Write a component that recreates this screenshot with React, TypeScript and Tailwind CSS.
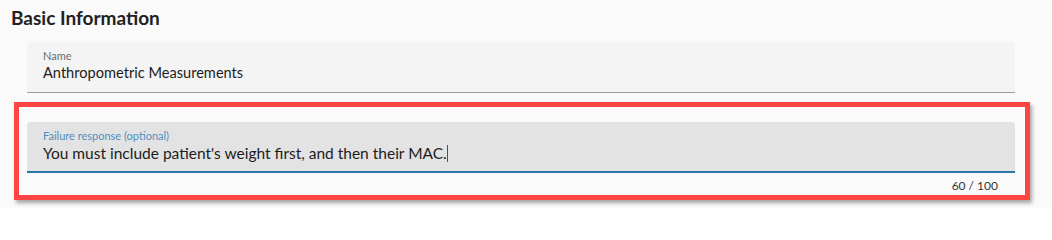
export default function App() {
  return (
    <div className="w-[1052px] h-[208px] bg-[#fafafa] font-['Lato',sans-serif] text-[#1f1f1f] overflow-hidden">
      <h2 className="pl-[11px] pt-[6px] text-[19px] leading-[24px] font-bold text-[#212121]">Basic Information</h2>

      <div className="ml-[27px] mt-[12px] w-[988px] h-[51px] bg-[#f4f4f4] border-b border-[#9c9c9c] rounded-t-[4px] px-[16px] pt-[7px]">
        <div className="text-[11px] leading-[14px] text-[#6b6b6b]">Name</div>
        <div className="text-[14.6px] leading-[20px] text-[#1c1c1c]">Anthropometric Measurements</div>
      </div>

      <div className="ml-[14px] mt-[9px] w-[1016px] h-[98px] border-[5px] border-[#ff4444] shadow-[2px_3px_4px_rgba(0,0,0,0.35)] pl-[8px] pr-[10px] pt-[15px]">
        <div className="w-[988px] h-[51px] bg-[#e3e3e3] border-b-2 border-[#2a77a8] rounded-t-[4px] px-[16px] pt-[7px]">
          <div className="text-[11px] leading-[14px] text-[#4f8fbf]">Failure response (optional)</div>
          <div className="text-[15.5px] leading-[20px] text-[#1c1c1c] flex items-center">
            <span>You must include patient's weight first, and then their MAC.</span>
            <span className="w-px h-[17px] bg-[#1f5f8f]" />
          </div>
        </div>
        <div className="w-[988px] pr-[17px] pt-[5px] text-right text-[12px] leading-[16px] text-[#333]">60 / 100</div>
      </div>
    </div>
  );
}
